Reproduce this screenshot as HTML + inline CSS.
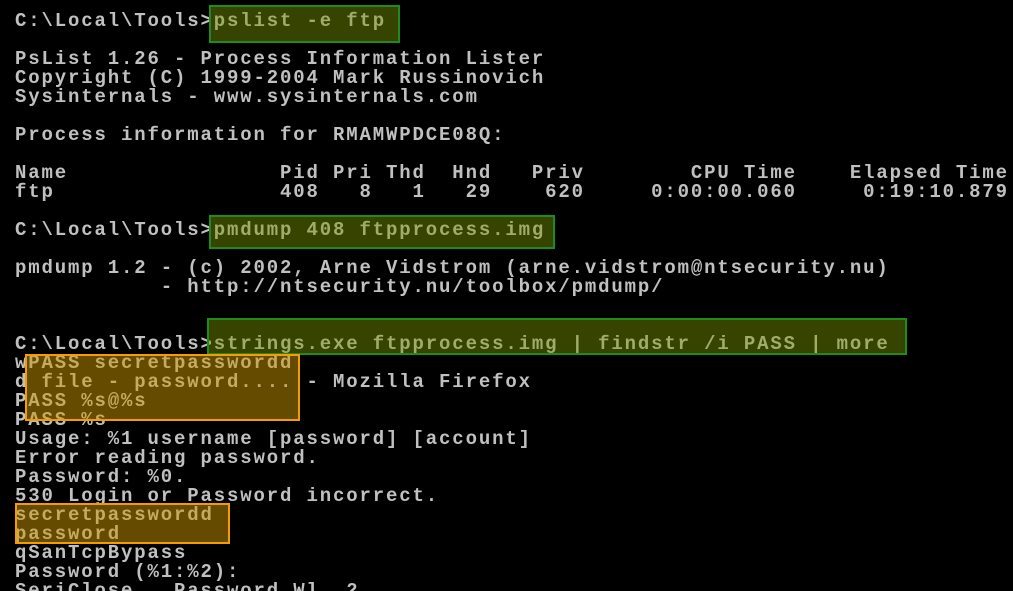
<!DOCTYPE html>
<html><head><meta charset="utf-8"><style>
html,body{margin:0;padding:0;background:#000;width:1013px;height:591px;overflow:hidden;position:relative}
pre{position:absolute;left:15px;top:12px;margin:0;font-family:"Liberation Mono",monospace;font-weight:bold;font-size:19px;line-height:19px;letter-spacing:1.85px;color:#c0c0c0}
.g{position:absolute;box-sizing:border-box;border:2px solid #1d8c1d;background:rgba(120,150,0,0.45)}
.o{position:absolute;box-sizing:border-box;border:2px solid #f59d00;background:rgba(200,150,0,0.5)}
</style></head><body>
<pre>C:\Local\Tools&gt;pslist -e ftp

PsList 1.26 - Process Information Lister
Copyright (C) 1999-2004 Mark Russinovich
Sysinternals - www.sysinternals.com

Process information for RMAMWPDCE08Q:

Name                Pid Pri Thd  Hnd   Priv        CPU Time    Elapsed Time
ftp                 408   8   1   29    620     0:00:00.060     0:19:10.879

C:\Local\Tools&gt;pmdump 408 ftpprocess.img

pmdump 1.2 - (c) 2002, Arne Vidstrom (arne.vidstrom@ntsecurity.nu)
           - http://ntsecurity.nu/toolbox/pmdump/


C:\Local\Tools&gt;strings.exe ftpprocess.img | findstr /i PASS | more
wPASS secretpasswordd
d file - password.... - Mozilla Firefox
PASS %s@%s
PASS %s
Usage: %1 username [password] [account]
Error reading password.
Password: %0.
530 Login or Password incorrect.
secretpasswordd
password
qSanTcpBypass
Password (%1:%2):
SeriClose   Password Wl  2</pre>
<div class="g" style="left:209px;top:5px;width:191px;height:38px"></div>
<div class="g" style="left:209px;top:215px;width:346px;height:34px"></div>
<div class="g" style="left:207px;top:318px;width:700px;height:37px"></div>
<div class="o" style="left:25px;top:354px;width:275px;height:67px"></div>
<div class="o" style="left:15px;top:503px;width:215px;height:41px"></div>
</body></html>
